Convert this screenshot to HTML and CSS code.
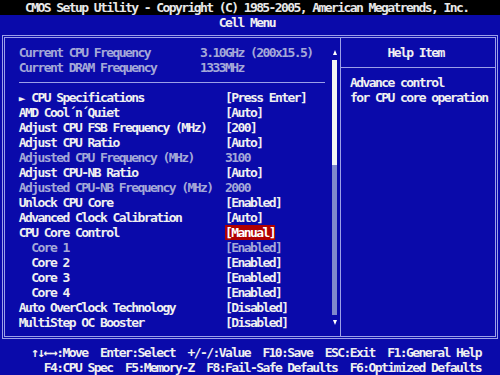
FILE: index.html
```html
<!DOCTYPE html>
<html lang="en">
<head>
    <meta charset="UTF-8">
    <meta name="viewport" content="width=device-width, initial-scale=1.0">
    <title>CMOS Setup Utility - Cell Menu</title>
    <link rel="stylesheet" href="styles.css">
</head>
<body>

    <div class="title">CMOS Setup Utility - Copyright (C) 1985-2005, American Megatrends, Inc.</div>
    <div class="subtitle">Cell Menu</div>

    <div class="frame">
        <div class="frame-inner">
            <div class="left">
                <div class="list">
                    <div class="row dim"><span class="info-label">Current CPU Frequency</span><span>3.10GHz (200x15.5)</span></div>
                    <div class="row dim"><span class="info-label">Current DRAM Frequency</span><span>1333MHz</span></div>
                    <div class="sep"></div>
                    <div class="row"><span class="label"><span class="pointer">&#9658;</span> CPU Specifications</span><span>[Press Enter]</span></div>
                    <div class="row"><span class="label">AMD Cool&#180;n&#180;Quiet</span><span>[Auto]</span></div>
                    <div class="row"><span class="label">Adjust CPU FSB Frequency (MHz)</span><span>[200]</span></div>
                    <div class="row"><span class="label">Adjust CPU Ratio</span><span>[Auto]</span></div>
                    <div class="row dim"><span class="label">Adjusted CPU Frequency (MHz)</span><span>3100</span></div>
                    <div class="row"><span class="label">Adjust CPU-NB Ratio</span><span>[Auto]</span></div>
                    <div class="row dim"><span class="label">Adjusted CPU-NB Frequency (MHz)</span><span>2000</span></div>
                    <div class="row"><span class="label">Unlock CPU Core</span><span>[Enabled]</span></div>
                    <div class="row"><span class="label">Advanced Clock Calibration</span><span>[Auto]</span></div>
                    <div class="row"><span class="label">CPU Core Control</span><span class="selected">[Manual]</span></div>
                    <div class="row dim"><span class="label sub">Core 1</span><span>[Enabled]</span></div>
                    <div class="row"><span class="label sub">Core 2</span><span>[Enabled]</span></div>
                    <div class="row"><span class="label sub">Core 3</span><span>[Enabled]</span></div>
                    <div class="row"><span class="label sub">Core 4</span><span>[Enabled]</span></div>
                    <div class="row"><span class="label">Auto OverClock Technology</span><span>[Disabled]</span></div>
                    <div class="row"><span class="label">MultiStep OC Booster</span><span>[Disabled]</span></div>
                </div>
                <div class="scrollbar">
                    <div class="arrow up"></div>
                    <div class="thumb"></div>
                    <div class="track"></div>
                    <div class="arrow down"></div>
                </div>
            </div>
            <div class="help">
                <div class="help-head">Help Item</div>
                <div class="help-text">
                    <div>Advance control</div>
                    <div>for CPU core operation</div>
                </div>
            </div>
        </div>
    </div>

    <div class="keys">
        <div class="keys-1">&#8593;&#8595;&#8592;&#8594;:Move  Enter:Select  +/-/:Value  F10:Save  ESC:Exit  F1:General Help</div>
        <div class="keys-2">F4:CPU Spec  F5:Memory-Z  F8:Fail-Safe Defaults  F6:Optimized Defaults</div>
    </div>

</body>
</html>
```

FILE: styles.css
```css
body {
    margin: 0;
    width: 500px;
    height: 375px;
    overflow: hidden;
    background-color: #0a0aaa;
    color: #f0f0f0;
    font-family: "DejaVu Sans Mono", monospace;
    font-weight: bold;
    font-size: 13px;
    letter-spacing: -1.58px;
    line-height: 15px;
}
.title {
    height: 15px;
    padding-left: 25px;
    background-color: #000000;
    color: #e8e8e8;
    white-space: pre;
}
.subtitle {
    height: 15px;
    padding-left: 218.75px;
}
.frame {
    margin: 5px 2px 0;
    border: 1px solid #9ca0e8;
    padding: 1px;
}
.frame-inner {
    display: flex;
    height: 298px;
    border: 1px solid #9ca0e8;
}
.left {
    display: flex;
    width: 335px;
    border-right: 1px solid #9ca0e8;
}
.list {
    flex: 1;
    padding: 7px 0 0 13.75px;
}
.row {
    display: flex;
    height: 15px;
    white-space: pre;
}
.dim {
    color: #a4a8d8;
}
.info-label {
    width: 181.25px;
}
.label {
    width: 206.25px;
}
.label.sub {
    padding-left: 12.5px;
    box-sizing: border-box;
}
.pointer {
    font-size: 11px;
    letter-spacing: -0.37px;
}
.selected {
    background-color: #b00000;
    color: #ffffff;
}
.sep {
    width: 306.25px;
    height: 7px;
    border-bottom: 1px solid #9ca0e8;
    margin-bottom: 7px;
}
.scrollbar {
    display: flex;
    flex-direction: column;
    width: 5px;
    margin: 7px 3px 0 0;
}
.arrow {
    height: 15px;
    display: flex;
    align-items: center;
    justify-content: center;
}
.arrow::before {
    content: "";
    border-left: 2.5px solid transparent;
    border-right: 2.5px solid transparent;
}
.arrow.up::before {
    border-bottom: 5px solid #ffffff;
}
.arrow.down::before {
    border-top: 5px solid #ffffff;
}
.thumb {
    height: 105px;
    background-color: #f4f4f4;
}
.track {
    height: 150px;
    background-color: #8088cc;
}
.help {
    flex: 1;
}
.help-head {
    height: 15px;
    padding: 7px 0 7px 46.5px;
    border-bottom: 1px solid #9ca0e8;
}
.help-text {
    padding: 7px 0 0 9px;
}
.keys {
    margin-top: 6px;
}
.keys-1,
.keys-2 {
    white-space: pre;
}
.keys-1 {
    padding-left: 31.25px;
}
.keys-2 {
    padding-left: 43.75px;
}
```
